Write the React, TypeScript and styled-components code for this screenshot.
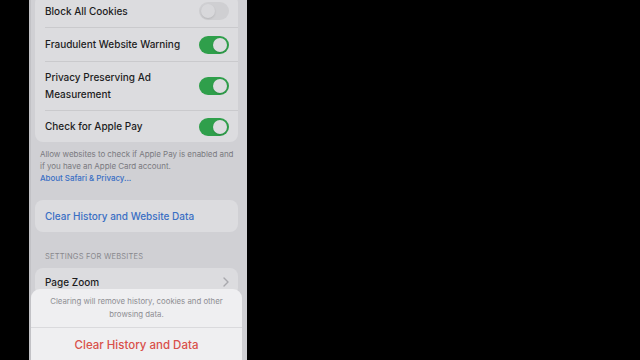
import React from 'react'
import styled, { createGlobalStyle } from 'styled-components'

const GlobalStyle = createGlobalStyle`
  html, body {
    margin: 0;
    padding: 0;
    background: #000;
  }
  body {
    font-family: Inter, "Liberation Sans", Arial, sans-serif;
  }
`

const Stage = styled.div`
  width: 640px;
  height: 360px;
  overflow: hidden;
  background: #000;
  display: flex;
`

const Screen = styled.div`
  position: relative;
  margin-left: 29px;
  width: 218px;
  height: 360px;
  overflow: hidden;
  background: #d0d0d4;
  box-shadow: inset 2px 0 0 #c2c2c6;
`

const Scroller = styled.div`
  display: flex;
  flex-direction: column;
  margin-top: -5px;
  padding: 0 9px 0 6px;
`

const Card = styled.div<{ $mt?: number }>`
  background: #dcdcdf;
  border-radius: 8px;
  margin-top: ${({ $mt }) => ($mt ? $mt + 'px' : '0')};
  overflow: hidden;
`

const Row = styled.div<{ $h: number }>`
  display: flex;
  align-items: center;
  justify-content: space-between;
  height: ${({ $h }) => $h}px;
  margin-left: 10px;
  padding-right: 9px;
  border-bottom: 1px solid #cacacd;

  &:last-child {
    border-bottom: none;
  }
`

const Label = styled.div<{ $color?: string }>`
  font-size: 10px;
  font-weight: 500;
  line-height: 17px;
  color: ${({ $color }) => $color || '#1c1c1e'};
`

const Toggle = styled.div<{ $on: boolean }>`
  position: relative;
  width: 30px;
  height: 18px;
  border-radius: 9px;
  background: ${({ $on }) => ($on ? '#2f9f4b' : '#cfcfd2')};
  flex-shrink: 0;

  &::after {
    content: '';
    position: absolute;
    top: 2px;
    left: ${({ $on }) => ($on ? '14px' : '2px')};
    width: 14px;
    height: 14px;
    border-radius: 50%;
    background: ${({ $on }) => ($on ? '#dcdcdf' : '#d8d8db')};
    box-shadow: 0 1px 2px rgba(0, 0, 0, 0.12);
  }
`

const Footnote = styled.div`
  padding: 6px 4px 0 5px;
  font-size: 8px;
  line-height: 12px;
  color: #7a7a7f;
  letter-spacing: -0.05px;
`

const Link = styled.div`
  color: #3a6fc4;
  font-weight: 500;
`

const SectionHeader = styled.div`
  margin-top: 19px;
  padding-left: 10px;
  font-size: 7.5px;
  line-height: 12px;
  letter-spacing: 0.2px;
  color: #88888d;
`

const Chevron = styled.svg`
  width: 6px;
  height: 10px;
  flex-shrink: 0;
`

const Sheet = styled.div`
  position: absolute;
  left: 2px;
  right: 5px;
  top: 289px;
  height: 90px;
  background: #efeff1;
  border-radius: 9px;
  display: flex;
  flex-direction: column;
`

const SheetMessage = styled.div`
  height: 39px;
  padding: 6px 14px 0;
  box-sizing: border-box;
  text-align: center;
  font-size: 7.8px;
  line-height: 13px;
  color: #8e8e93;
  border-bottom: 1px solid #dadadd;
`

const SheetAction = styled.div`
  height: 34px;
  display: flex;
  align-items: center;
  justify-content: center;
  font-size: 11.5px;
  font-weight: 500;
  color: #d9504a;
`

export default function App() {
  return (
    <>
      <GlobalStyle />
      <Stage>
        <Screen>
          <Scroller>
            <Card>
              <Row $h={32}>
                <Label>Block All Cookies</Label>
                <Toggle $on={false} />
              </Row>
              <Row $h={33}>
                <Label>Fraudulent Website Warning</Label>
                <Toggle $on />
              </Row>
              <Row $h={48}>
                <Label>
                  Privacy Preserving Ad
                  <br />
                  Measurement
                </Label>
                <Toggle $on />
              </Row>
              <Row $h={31}>
                <Label>Check for Apple Pay</Label>
                <Toggle $on />
              </Row>
            </Card>
            <Footnote>
              Allow websites to check if Apple Pay is enabled and if you have an Apple Card account.
              <Link>About Safari &amp; Privacy...</Link>
            </Footnote>
            <Card $mt={16}>
              <Row $h={32}>
                <Label $color="#3a6fc4">Clear History and Website Data</Label>
              </Row>
            </Card>
            <SectionHeader>SETTINGS FOR WEBSITES</SectionHeader>
            <Card $mt={5}>
              <Row $h={28}>
                <Label>Page Zoom</Label>
                <Chevron viewBox="0 0 6 10">
                  <path d="M1 1l4 4-4 4" fill="none" stroke="#a8a8ad" strokeWidth="1.4" strokeLinecap="round" strokeLinejoin="round" />
                </Chevron>
              </Row>
            </Card>
          </Scroller>
          <Sheet>
            <SheetMessage>
              Clearing will remove history, cookies and other
              <br />
              browsing data.
            </SheetMessage>
            <SheetAction>Clear History and Data</SheetAction>
          </Sheet>
        </Screen>
      </Stage>
    </>
  )
}
